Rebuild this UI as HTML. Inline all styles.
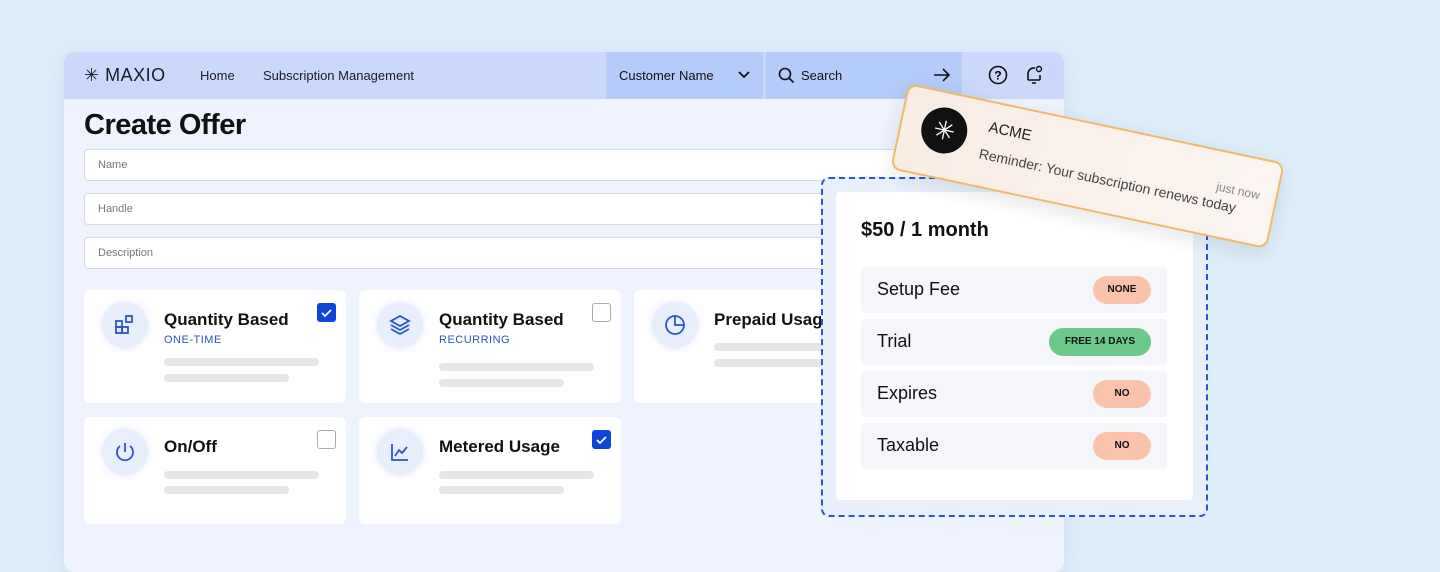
<!DOCTYPE html>
<html><head><meta charset="utf-8"><style>
*{box-sizing:border-box;margin:0;padding:0}
body{width:1440px;height:540px;overflow:hidden;background:#deedfa;font-family:"Liberation Sans",sans-serif;position:relative;color:#111}
.app{position:absolute;left:64px;top:52px;width:1000px;height:520px;background:#eff3fd;border-radius:10px;overflow:hidden;box-shadow:0 4px 20px rgba(120,150,200,.15)}
.hdr{position:absolute;left:0;top:0;width:1000px;height:47px;background:#cad9fb}
.hdr .t{position:absolute;top:16px;font-size:13px;color:#1a1a2a}
.cust{position:absolute;left:542px;top:0;width:157px;height:47px;background:#b5cbf8}
.srch{position:absolute;left:702px;top:0;width:196px;height:47px;background:#b5cbf8}
h1{position:absolute;left:20px;top:57px;font-size:29px;font-weight:bold;letter-spacing:-.5px}
.inp{position:absolute;left:20px;width:900px;height:32px;background:#fff;border:1px solid #d5d9e2;border-radius:4px;font-size:11px;color:#777;padding:9px 13px}
.card{position:absolute;width:262px;height:113px;background:#fff;border-radius:6px}
.ic{position:absolute;left:18px;top:12px;width:46px;height:46px;border-radius:50%;background:#e8eefc;box-shadow:0 0 8px #e3eafc}
.ic svg{position:absolute;left:11px;top:11px}
.ct{position:absolute;left:80px;top:20px;font-size:17px;font-weight:bold}
.cs{position:absolute;left:80px;top:44px;font-size:11px;color:#2a56c6;letter-spacing:.5px}
.bar{position:absolute;left:80px;height:8px;border-radius:4px;background:#e6e6e6}
.cb{position:absolute;right:10px;top:13px;width:19px;height:19px;border-radius:3px;border:1px solid #aaa;background:#fff}
.cb.on{background:#0e47d8;border-color:#0e47d8}
.dash{position:absolute;left:821px;top:177px;width:387px;height:340px;border:2px dashed #2753d6;border-radius:8px;background:#e9f0fc}
.inner{position:absolute;left:836px;top:192px;width:357px;height:308px;background:#fff;border-radius:4px}
.row{position:absolute;left:861px;width:306px;height:46px;background:#f4f6fa;border-radius:3px;font-size:18px;padding:12px 16px}
.pill{position:absolute;right:16px;top:9px;height:28px;border-radius:14px;background:#fbc3ab;font-size:10px;font-weight:bold;line-height:28px;text-align:center}
.notif{position:absolute;left:895px;top:122px;width:385px;height:88px;background:linear-gradient(90deg,#f8ece4,#fbf5f1);border:2px solid #f0b96a;border-radius:10px;transform:rotate(12deg);box-shadow:0 6px 20px rgba(0,0,0,.1)}
</style></head><body>
<div class="app">
 <div class="hdr">
  <div class="t" style="left:20px;top:13px;font-size:18px;letter-spacing:.5px">✳ MAXIO</div>
  <div class="t" style="left:136px">Home</div>
  <div class="t" style="left:199px">Subscription Management</div>
  <div class="cust"><span style="position:absolute;left:13px;top:16px;font-size:13px">Customer Name</span>
   <svg style="position:absolute;left:131px;top:18px" width="14" height="10" viewBox="0 0 14 10"><path d="M2 2l5 5 5-5" stroke="#111" stroke-width="1.8" fill="none"/></svg></div>
  <div class="srch"><svg style="position:absolute;left:12px;top:15px" width="17" height="17" viewBox="0 0 17 17"><circle cx="7" cy="7" r="5.5" stroke="#111" stroke-width="1.6" fill="none"/><path d="M11 11l4.5 4.5" stroke="#111" stroke-width="1.6"/></svg>
   <span style="position:absolute;left:35px;top:16px;font-size:13px">Search</span>
   <svg style="position:absolute;left:167px;top:16px" width="18" height="14" viewBox="0 0 18 14"><path d="M1 7h15M10 1l6 6-6 6" stroke="#111" stroke-width="1.6" fill="none"/></svg></div>
  <svg style="position:absolute;left:924px;top:13px" width="20" height="20" viewBox="0 0 20 20"><circle cx="10" cy="10" r="8.5" stroke="#111" stroke-width="1.6" fill="none"/><text x="10" y="14.5" font-size="12" font-weight="bold" text-anchor="middle" font-family="Liberation Sans">?</text></svg>
  <svg style="position:absolute;left:960px;top:12px" width="20" height="22" viewBox="0 0 20 22"><path d="M4 16V10a6 6 0 0 1 7-6M4 16h12M16 16v-5M8 19h4" stroke="#111" stroke-width="1.6" fill="none"/><circle cx="15" cy="5" r="2.5" stroke="#111" stroke-width="1.4" fill="none"/></svg>
 </div>
 <h1>Create Offer</h1>
 <div class="inp" style="top:97px">Name</div>
 <div class="inp" style="top:141px">Handle</div>
 <div class="inp" style="top:185px">Description</div>
</div>
<div class="card" style="left:84px;top:290px"><div class="ic"><svg width="24" height="24" viewBox="0 0 24 24" fill="none" stroke="#2a56c6" stroke-width="1.8"><rect x="3" y="8" width="6" height="6"/><rect x="3" y="14" width="6" height="6"/><rect x="9" y="14" width="6" height="6"/><rect x="13" y="3" width="6" height="6"/></svg></div><div class="ct">Quantity Based</div><div class="cs">ONE-TIME</div><div class="bar" style="top:68px;width:155px"></div><div class="bar" style="top:84px;width:125px"></div><div class="cb on"><svg width="17" height="17" viewBox="0 0 17 17"><path d="M4 9l3 3 6-6" stroke="#fff" stroke-width="1.8" fill="none"/></svg></div></div>
<div class="card" style="left:359px;top:290px"><div class="ic"><svg width="24" height="24" viewBox="0 0 24 24" fill="none" stroke="#2a56c6" stroke-width="1.8"><path d="M12 3l9 5-9 5-9-5z"/><path d="M3 12l9 5 9-5M3 16l9 5 9-5"/></svg></div><div class="ct">Quantity Based</div><div class="cs">RECURRING</div><div class="bar" style="top:73px;width:155px"></div><div class="bar" style="top:89px;width:125px"></div><div class="cb"></div></div>
<div class="card" style="left:634px;top:290px"><div class="ic"><svg width="24" height="24" viewBox="0 0 24 24" fill="none" stroke="#2a56c6" stroke-width="1.8"><circle cx="12" cy="12" r="9"/><path d="M12 3v9h9"/></svg></div><div class="ct">Prepaid Usage</div><div class="bar" style="top:53px;width:155px"></div><div class="bar" style="top:69px;width:125px"></div></div>
<div class="card" style="left:84px;top:417px;height:107px"><div class="ic"><svg width="24" height="24" viewBox="0 0 24 24" fill="none" stroke="#2a56c6" stroke-width="1.8"><path d="M12 3v9M7 6a8 8 0 1 0 10 0"/></svg></div><div class="ct">On/Off</div><div class="bar" style="top:54px;width:155px"></div><div class="bar" style="top:69px;width:125px"></div><div class="cb"></div></div>
<div class="card" style="left:359px;top:417px;height:107px"><div class="ic"><svg width="24" height="24" viewBox="0 0 24 24" fill="none" stroke="#2a56c6" stroke-width="1.8"><path d="M4 4v16h16M7 16l4-6 3 3 5-6"/></svg></div><div class="ct">Metered Usage</div><div class="bar" style="top:54px;width:155px"></div><div class="bar" style="top:69px;width:125px"></div><div class="cb on"><svg width="17" height="17" viewBox="0 0 17 17"><path d="M4 9l3 3 6-6" stroke="#fff" stroke-width="1.8" fill="none"/></svg></div></div>
<div class="dash"></div>
<div class="inner"><div style="position:absolute;left:25px;top:27px;font-size:20px;font-weight:bold">$50 / 1 month</div></div>
<div class="row" style="top:267px">Setup Fee<div class="pill" style="width:58px">NONE</div></div>
<div class="row" style="top:319px">Trial<div class="pill" style="width:102px;background:#6cc98a">FREE 14 DAYS</div></div>
<div class="row" style="top:371px">Expires<div class="pill" style="width:58px">NO</div></div>
<div class="row" style="top:423px">Taxable<div class="pill" style="width:58px">NO</div></div>
<div class="notif">
 <div style="position:absolute;left:20px;top:14px;width:46px;height:46px;border-radius:50%;background:#111;color:#fff;font-size:26px;text-align:center;line-height:46px">✳</div>
 <div style="position:absolute;left:86px;top:16px;font-size:15px;color:#222">ACME</div>
 <div style="position:absolute;left:82px;top:44px;font-size:14px;color:#444;white-space:nowrap">Reminder: Your subscription renews today</div>
 <div style="position:absolute;right:16px;top:28px;font-size:12px;color:#888">just now</div>
</div>
</body></html>
